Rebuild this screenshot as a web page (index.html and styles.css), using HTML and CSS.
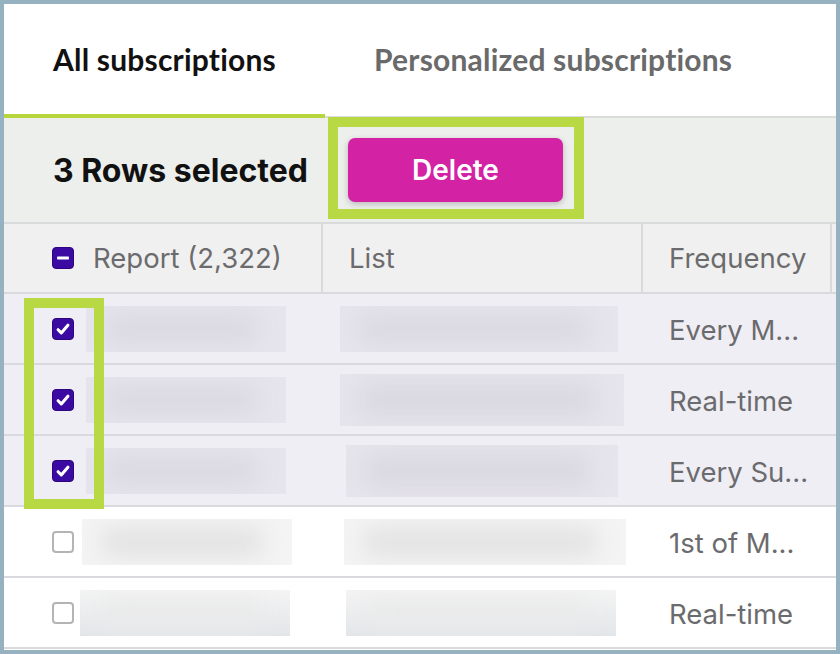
FILE: index.html
```html
<!DOCTYPE html>
<html>
<head>
<meta charset="utf-8">
<link rel="stylesheet" href="styles.css">
</head>
<body>
<div class="frame">
  <div class="tabs">
    <div class="tab active">All subscriptions</div>
    <div class="tab">Personalized subscriptions</div>
    <div class="tab-rest"></div>
  </div>
  <div class="toolbar">
    <span class="count">3 Rows selected</span>
    <button class="delete">Delete</button>
  </div>
  <div class="table">
    <div class="row head">
      <div class="cell c1"><span class="cb mixed"><svg viewBox="0 0 22 22"><rect x="4.5" y="9.3" width="13" height="3.4" rx="0.5" fill="#fff"/></svg></span><span class="htext">Report (2,322)</span></div>
      <div class="cell c2"><span class="htext">List</span></div>
      <div class="cell c3"><span class="htext">Frequency</span></div>
    </div>
    <div class="row sel">
      <div class="cell c1"><span class="cb on"><svg viewBox="0 0 22 22"><path d="M5.6 11.8l3.5 3.5L16.4 6.8" fill="none" stroke="#fff" stroke-width="3.4" stroke-linecap="round" stroke-linejoin="round"/></svg></span><span class="blob b1"></span></div>
      <div class="cell c2"><span class="blob b2"></span></div>
      <div class="cell c3"><span class="val">Every M...</span></div>
    </div>
    <div class="row sel">
      <div class="cell c1"><span class="cb on"><svg viewBox="0 0 22 22"><path d="M5.6 11.8l3.5 3.5L16.4 6.8" fill="none" stroke="#fff" stroke-width="3.4" stroke-linecap="round" stroke-linejoin="round"/></svg></span><span class="blob b1"></span></div>
      <div class="cell c2"><span class="blob b2 tall"></span></div>
      <div class="cell c3"><span class="val">Real-time</span></div>
    </div>
    <div class="row sel">
      <div class="cell c1"><span class="cb on"><svg viewBox="0 0 22 22"><path d="M5.6 11.8l3.5 3.5L16.4 6.8" fill="none" stroke="#fff" stroke-width="3.4" stroke-linecap="round" stroke-linejoin="round"/></svg></span><span class="blob b1"></span></div>
      <div class="cell c2"><span class="blob b2 tall shift"></span></div>
      <div class="cell c3"><span class="val">Every Su...</span></div>
    </div>
    <div class="row">
      <div class="cell c1"><span class="cb"></span><span class="blob b1 w wide"></span></div>
      <div class="cell c2"><span class="blob b2 w r4"></span></div>
      <div class="cell c3"><span class="val">1st of M...</span></div>
    </div>
    <div class="row">
      <div class="cell c1"><span class="cb"></span><span class="blob b1 w blue"></span></div>
      <div class="cell c2"><span class="blob b2 w blue shift"></span></div>
      <div class="cell c3"><span class="val">Real-time</span></div>
    </div>
  </div>
  <div class="mark mark-delete"></div>
  <div class="mark mark-checks"></div>
</div>
</body>
</html>
```

FILE: styles.css
```css
html, body {
  margin: 0;
  padding: 0;
}
body {
  background: #96b1bf;
  width: 840px;
  height: 654px;
  overflow: hidden;
}
.frame {
  position: relative;
  margin: 4px;
  width: 832px;
  height: 646px;
  background: #fff;
  overflow: hidden;
  font-family: Inter, "Liberation Sans", sans-serif;
}
.tabs {
  display: flex;
  height: 114px;
}
.tab {
  box-sizing: border-box;
  height: 114px;
  padding: 37px 0 0 49px;
  font-family: Lato, "Noto Sans", sans-serif;
  font-size: 30px;
  font-weight: 700;
  letter-spacing: 0.2px;
  color: #6a6a6a;
  border-bottom: 2px solid #d9dcd9;
  width: 500px;
  white-space: nowrap;
}
.tab.active {
  width: 321px;
  color: #111;
  border-bottom: 4px solid #b7d63c;
}
.tab-rest {
  flex: 1;
  border-bottom: 2px solid #d9dcd9;
}
.toolbar {
  display: flex;
  align-items: center;
  height: 104px;
  background: #ecefec;
  padding-left: 49px;
  box-sizing: border-box;
}
.count {
  font-size: 32px;
  font-weight: 700;
  color: #111;
  letter-spacing: 0;
  width: 295px;
  white-space: nowrap;
}
.delete {
  margin: 0;
  width: 215px;
  height: 64px;
  border: none;
  border-radius: 7px;
  background: #d422a4;
  color: #fff;
  font-family: Inter, "Liberation Sans", sans-serif;
  font-size: 28px;
  font-weight: 600;
  box-shadow: 0 2px 6px rgba(0, 0, 0, 0.22);
}
.row {
  display: flex;
  height: 71px;
  box-sizing: border-box;
  border-bottom: 2px solid #d9dadd;
  background: #fff;
}
.row.head {
  height: 72px;
  border-top: 2px solid #d9dadc;
  background: #f0f0f0;
}
.row.sel {
  background: #f0eef5;
}
.cell {
  box-sizing: border-box;
  display: flex;
  align-items: center;
}
.c1 { width: 319px; padding-left: 48px; }
.c2 { width: 320px; padding-left: 17px; }
.c3 { width: 189px; padding-left: 26px; }
.head .cell { border-right: 2px solid #d9dadc; }
.head .c2 { padding-left: 26px; }
.head .c1 .htext { margin-left: 19px; }
.htext, .val {
  font-size: 27.5px;
  color: #6b6b6d;
  white-space: nowrap;
}
.val { padding-top: 3px; }
.cb {
  flex: none;
  width: 22px;
  height: 22px;
  box-sizing: border-box;
  border-radius: 4px;
  border: 2px solid #b4b4b6;
  background: #fff;
  display: flex;
}
.cb svg { width: 100%; height: 100%; }
.cb.on, .cb.mixed {
  background: #3b0aa2;
  border: 1px solid #2d0580;
}
.blob {
  position: relative;
  overflow: hidden;
  display: block;
  flex: none;
  height: 46px;
  background: #e6e4ec;
}
.blob::after {
  content: "";
  position: absolute;
  left: 20px;
  right: 30px;
  top: 10px;
  bottom: 10px;
  background: #d9d7df;
  filter: blur(12px);
}
.b1 { width: 200px; margin-left: 12px; }
.b2 { width: 278px; }
.b2.tall { height: 52px; width: 284px; }
.b2.shift { margin-left: 6px; width: 272px; }
.b2.r4 { margin-left: 4px; width: 282px; }
.blob.w { background: #f4f4f4; }
.blob.w::after { background: #e0e0e0; }
.blob.wide { width: 210px; margin-left: 8px; }
.blob.blue {
  background: linear-gradient(#f4f4f4, #e3e6e9);
  margin-left: 6px;
  width: 210px;
}
.b2.blue { width: 270px; }
.blob.blue::after { background: #eaeaea; }
.mark {
  position: absolute;
  box-sizing: border-box;
  border: 10px solid #b8d943;
}
.mark-delete {
  left: 324px;
  top: 113px;
  width: 256px;
  height: 102px;
}
.mark-checks {
  left: 20px;
  top: 294px;
  width: 80px;
  height: 211px;
}
```
